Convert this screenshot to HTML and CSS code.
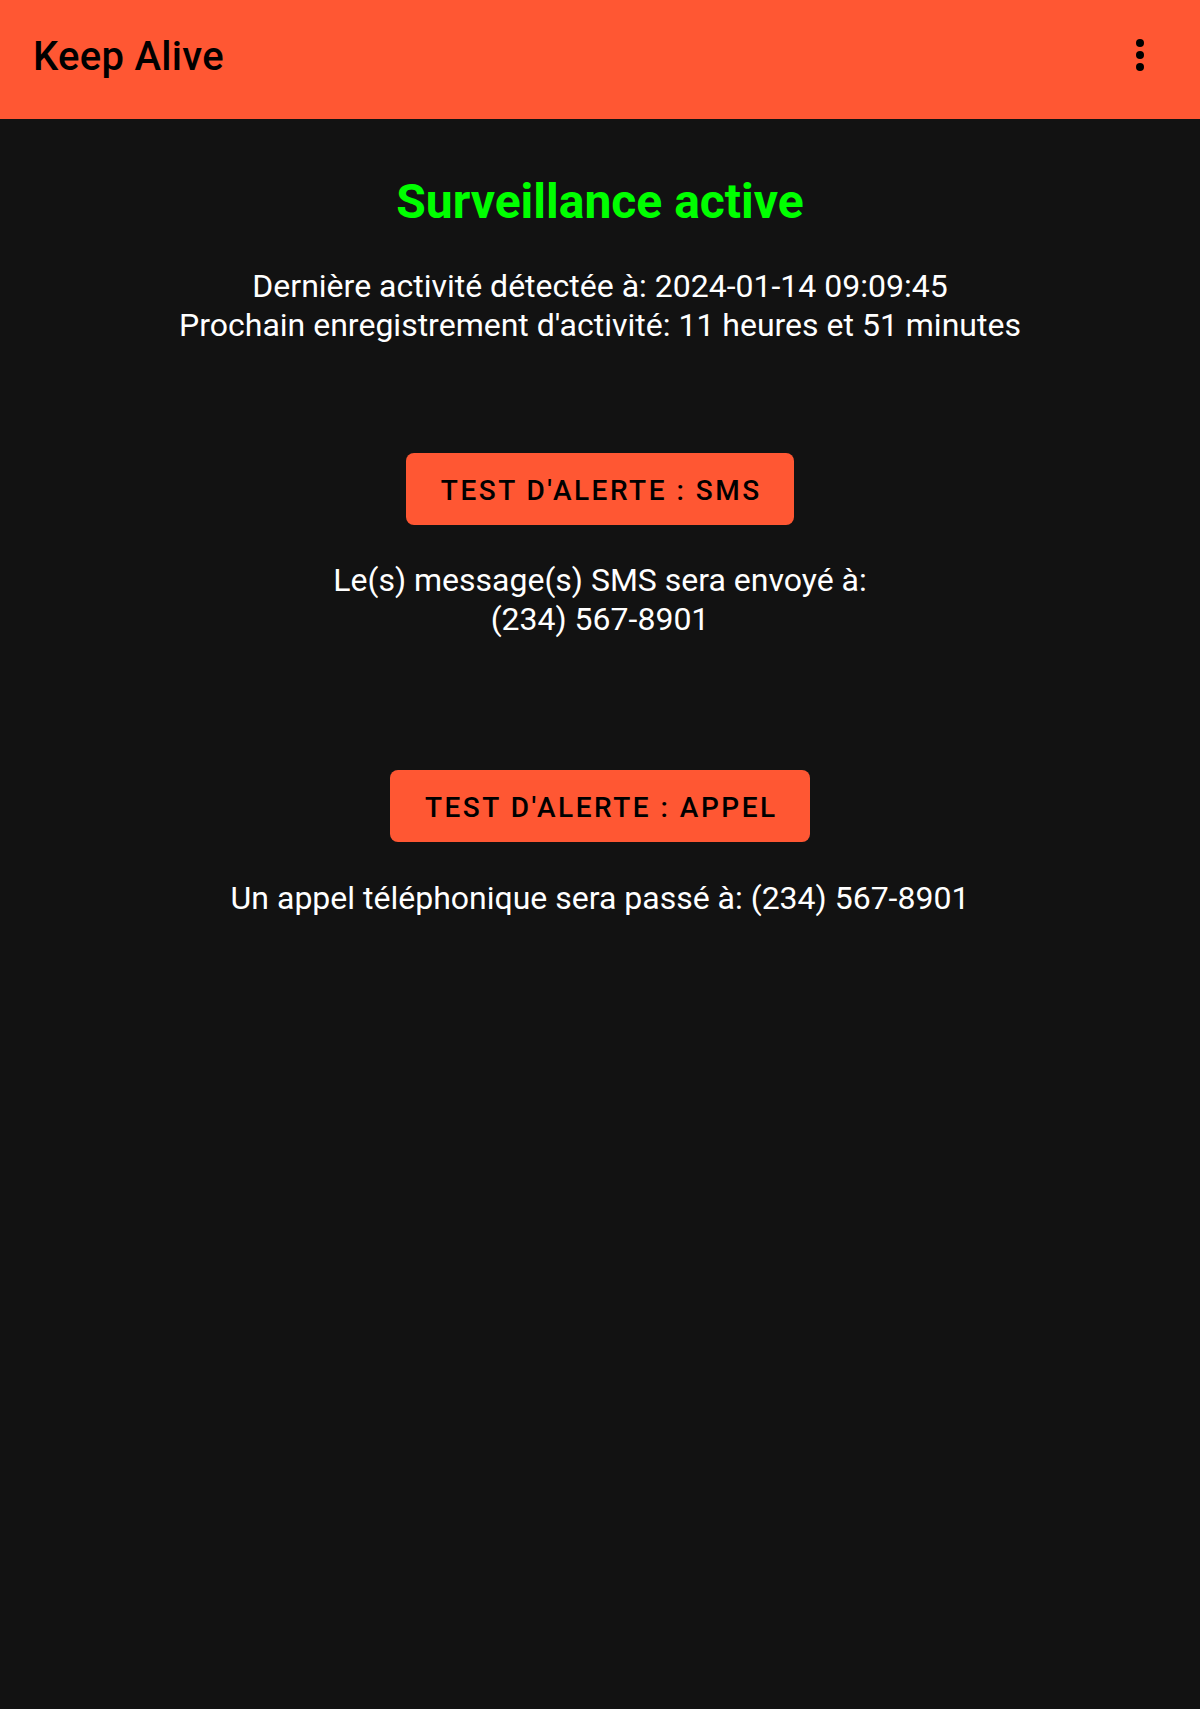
FILE: index.html
```html
<!DOCTYPE html>
<html lang="fr">
<head>
<meta charset="utf-8">
<title>Keep Alive</title>
<link rel="stylesheet" href="styles.css">
</head>
<body>
<header class="toolbar">
  <h1 class="toolbar-title">Keep Alive</h1>
  <button class="overflow" aria-label="Plus d'options">
    <svg width="48" height="48" viewBox="0 0 48 48" aria-hidden="true">
      <circle cx="24" cy="12" r="4" fill="#000"/>
      <circle cx="24" cy="24" r="4" fill="#000"/>
      <circle cx="24" cy="36" r="4" fill="#000"/>
    </svg>
  </button>
</header>
<main class="content">
  <h2 class="status">Surveillance active</h2>
  <p class="info info-activity">Dernière activité détectée à: 2024-01-14 09:09:45<br>Prochain enregistrement d'activité: 11 heures et 51 minutes</p>
  <button class="alert-btn btn-sms">Test d'alerte : SMS</button>
  <p class="info info-sms">Le(s) message(s) SMS sera envoyé à:<br>(234) 567-8901</p>
  <button class="alert-btn btn-call">Test d'alerte : Appel</button>
  <p class="info info-call">Un appel téléphonique sera passé à: (234) 567-8901</p>
</main>
</body>
</html>
```

FILE: styles.css
```css
html, body {
  margin: 0;
  padding: 0;
}
body {
  background: #121212;
  color: #ffffff;
  font-family: Roboto, "Noto Sans", "Liberation Sans", sans-serif;
  min-height: 1709px;
}
.toolbar {
  height: 119px;
  background: #ff5733;
  display: flex;
  align-items: center;
  justify-content: space-between;
  padding: 0 36px 0 33px;
  box-sizing: border-box;
}
.toolbar-title {
  margin: 0;
  font-size: 40px;
  font-weight: 500;
  letter-spacing: 0.3px;
  color: #000;
  line-height: 48px;
  position: relative;
  top: -3px;
}
.overflow {
  background: none;
  border: 0;
  padding: 0;
  width: 48px;
  height: 48px;
  display: flex;
  position: relative;
  top: -5px;
}
.content {
  display: flex;
  flex-direction: column;
  align-items: center;
  text-align: center;
}
.status {
  margin: 56px 0 0;
  font-size: 48px;
  line-height: 54px;
  font-weight: 700;
  color: #00ff00;
}
.info {
  margin: 0;
  font-size: 32px;
  line-height: 39px;
  font-weight: 400;
}
.info-activity {
  margin-top: 38px;
}
.alert-btn {
  font-family: inherit;
  height: 72px;
  box-sizing: border-box;
  padding: 3px 32px 0 34.5px;
  line-height: 69px;
  background: #ff5733;
  color: #000;
  border: 0;
  border-radius: 8px;
  font-size: 28px;
  font-weight: 500;
  letter-spacing: 2.5px;
  text-transform: uppercase;
}
.btn-sms {
  margin-top: 108px;
}
.info-sms {
  margin-top: 36px;
}
.btn-call {
  margin-top: 131px;
}
.info-call {
  margin-top: 36.5px;
}
```
